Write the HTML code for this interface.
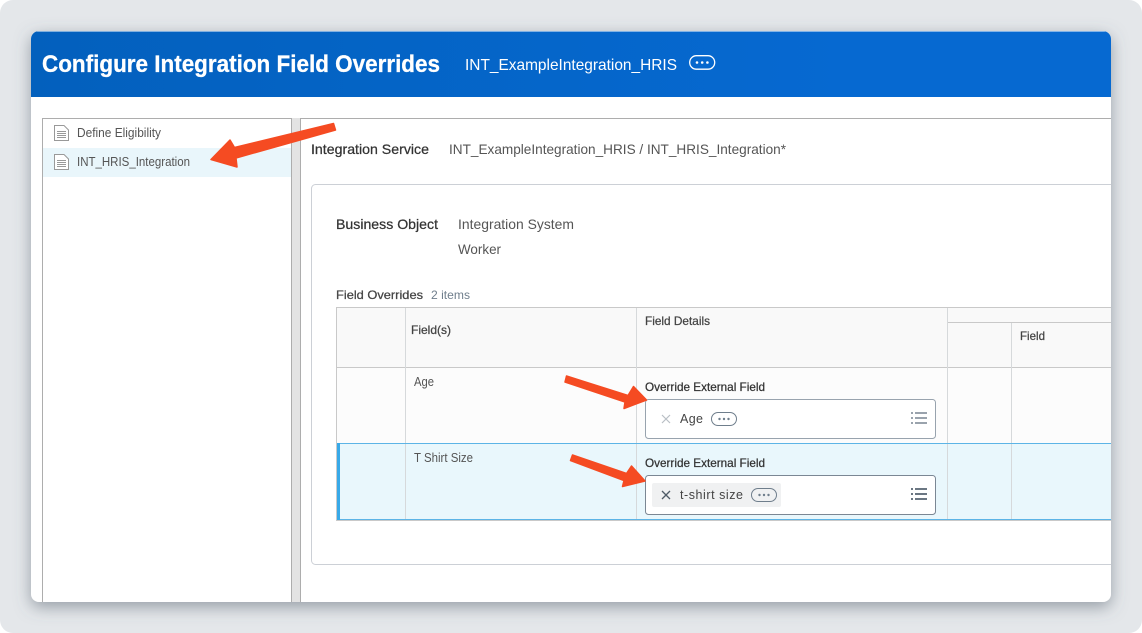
<!DOCTYPE html>
<html><head><meta charset="utf-8"><style>
html,body{margin:0;padding:0;background:#fff;width:1142px;height:633px;overflow:hidden}
svg{display:block}
text{font-family:"Liberation Sans",sans-serif}
.m{stroke:currentColor;stroke-width:.25}
</style></head><body>
<svg width="1142" height="633" viewBox="0 0 1142 633" xmlns="http://www.w3.org/2000/svg">
<defs>
<linearGradient id="h" x1="0" x2="1" y1="0" y2="0"><stop offset="0" stop-color="#0360bd"/><stop offset=".75" stop-color="#0669d1"/><stop offset="1" stop-color="#0669d1"/></linearGradient>
<filter id="s" x="-5%" y="-5%" width="110%" height="115%"><feDropShadow dx="0" dy="5" stdDeviation="8" flood-color="#56626e" flood-opacity=".55"/></filter>
<clipPath id="c"><rect x="31" y="31" width="1080" height="571" rx="8"/></clipPath>
<g id="doc" fill="none" stroke="#999"><path d="M.5.5H10L14.500 5V15.500H.5Z" stroke-width="1" fill="#fff"/><path d="M3 6.500H12M3 8.500H12M3 10.500H12M3 12.500H12" stroke-width=".9"/></g>
<g id="pill"><rect x=".5" y=".5" width="25" height="13" rx="6.500" fill="none" stroke="#6f7e8c"/><circle cx="8.500" cy="7" r="1.200" fill="#6f7e8c"/><circle cx="13" cy="7" r="1.200" fill="#6f7e8c"/><circle cx="17.500" cy="7" r="1.200" fill="#6f7e8c"/></g>
</defs>
<rect width="1142" height="633" rx="13" fill="#e4e7ea"/>
<rect x="31" y="31" width="1080" height="571" rx="8" fill="#fff" filter="url(#s)"/>
<g clip-path="url(#c)">
<rect x="31" y="31.500" width="1080" height="65.500" fill="url(#h)"/>
<rect x="42" y="148" width="250" height="29" fill="#e9f6fb"/>
<rect x="292" y="118" width="8" height="484" fill="#e3e3e3"/>
<path d="M42.500 602V118.500H291.500V602M300.500 602V118.500H1111" fill="none" stroke="#adadad"/>
<rect x="311.500" y="184.500" width="820" height="380" rx="4" fill="#fff" stroke="#ccd0d6"/>
<rect x="337" y="308" width="774" height="60" fill="#f9f9f9"/>
<rect x="337" y="368" width="774" height="76" fill="#fcfcfc"/>
<rect x="337" y="444" width="774" height="76" fill="#e9f7fc"/>
<path d="M1111 307.500H336.500V520.500H1111M948 322.500H1111M337 367.500H1111" fill="none" stroke="#c9c9c9"/>
<path d="M405.500 308V520M636.500 308V520M947.500 308V520M1011.500 323V520" fill="none" stroke="#d6d9db"/>
<path d="M337 443.500H1111M337 519.500H1111" fill="none" stroke="#5cb4e6"/>
<rect x="337" y="443" width="3" height="77" fill="#38a9e8"/>
<rect x="645.500" y="399.500" width="290" height="39" rx="3" fill="#fff" stroke="#98a3ae"/>
<rect x="645.500" y="475.500" width="290" height="39" rx="3" fill="#fff" stroke="#7b8794"/>
<rect x="652" y="483" width="129" height="24" rx="2" fill="#f0f1f2"/>
</g>
<use href="#doc" x="54" y="125"/>
<use href="#doc" x="54" y="154"/>
<path d="M662 415L670 423M670 415L662 423" stroke="#b9bfc5" stroke-width="1.200" fill="none"/>
<path d="M662 491L670 499M670 491L662 499" stroke="#4f5b67" stroke-width="1.300" fill="none"/>
<use href="#pill" x="711" y="412"/>
<use href="#pill" x="751" y="488"/>
<g fill="#9aa3ad"><rect x="911" y="412" width="2" height="2"/><rect x="915" y="412" width="12" height="2"/><rect x="911" y="417" width="2" height="2"/><rect x="915" y="417" width="12" height="2"/><rect x="911" y="422" width="2" height="2"/><rect x="915" y="422" width="12" height="2"/></g>
<g fill="#6b7783"><rect x="911" y="488" width="2" height="2"/><rect x="915" y="488" width="12" height="2"/><rect x="911" y="493" width="2" height="2"/><rect x="915" y="493" width="12" height="2"/><rect x="911" y="498" width="2" height="2"/><rect x="915" y="498" width="12" height="2"/></g>
<rect x="689.700" y="55.700" width="25" height="13.500" rx="6.700" fill="none" stroke="#fff" stroke-width="1.300"/>
<circle cx="697" cy="62.500" r="1.300" fill="#fff"/><circle cx="702.200" cy="62.500" r="1.300" fill="#fff"/><circle cx="707.400" cy="62.500" r="1.300" fill="#fff"/>
<text x="42" y="72" font-size="24" font-weight="700" fill="#fff" stroke="#fff" stroke-width=".3" textLength="398" lengthAdjust="spacingAndGlyphs">Configure Integration Field Overrides</text>
<text x="465" y="70" font-size="16" fill="#fff" textLength="212" lengthAdjust="spacingAndGlyphs">INT_ExampleIntegration_HRIS</text>
<text x="77" y="137" font-size="12.500" fill="#555" textLength="84" lengthAdjust="spacingAndGlyphs">Define Eligibility</text>
<text x="77" y="166" font-size="12.500" fill="#555" textLength="113" lengthAdjust="spacingAndGlyphs">INT_HRIS_Integration</text>
<text x="311" y="154" font-size="14" class="m" fill="#333" color="#333" textLength="118" lengthAdjust="spacingAndGlyphs">Integration Service</text>
<text x="449" y="154" font-size="14" fill="#555" textLength="337" lengthAdjust="spacingAndGlyphs">INT_ExampleIntegration_HRIS / INT_HRIS_Integration*</text>
<text x="336" y="229" font-size="14" class="m" fill="#333" color="#333" textLength="102" lengthAdjust="spacingAndGlyphs">Business Object</text>
<text x="458" y="229" font-size="14" fill="#555" textLength="116" lengthAdjust="spacingAndGlyphs">Integration System</text>
<text x="458" y="254" font-size="14" fill="#555" textLength="43" lengthAdjust="spacingAndGlyphs">Worker</text>
<text x="336" y="299" font-size="12" class="m" fill="#444" color="#444" textLength="87" lengthAdjust="spacingAndGlyphs">Field Overrides</text>
<text x="431" y="299" font-size="12" fill="#6f7e8c" textLength="39" lengthAdjust="spacingAndGlyphs">2 items</text>
<text x="411" y="334" font-size="12" class="m" fill="#444" color="#444" textLength="40" lengthAdjust="spacingAndGlyphs">Field(s)</text>
<text x="645" y="325" font-size="12" class="m" fill="#444" color="#444" textLength="65" lengthAdjust="spacingAndGlyphs">Field Details</text>
<text x="1020" y="340" font-size="12" class="m" fill="#444" color="#444" textLength="25" lengthAdjust="spacingAndGlyphs">Field</text>
<text x="414" y="386" font-size="12.500" fill="#555" textLength="20" lengthAdjust="spacingAndGlyphs">Age</text>
<text x="414" y="462" font-size="12.500" fill="#555" textLength="59" lengthAdjust="spacingAndGlyphs">T Shirt Size</text>
<text x="645" y="391" font-size="12" class="m" fill="#333" color="#333" textLength="120" lengthAdjust="spacingAndGlyphs">Override External Field</text>
<text x="645" y="467" font-size="12" class="m" fill="#333" color="#333" textLength="120" lengthAdjust="spacingAndGlyphs">Override External Field</text>
<text x="680" y="423" font-size="12.500" fill="#444" textLength="23" lengthAdjust="spacing">Age</text>
<text x="680" y="499" font-size="12.500" fill="#444" textLength="63" lengthAdjust="spacing">t-shirt size</text>
<g fill="#f54b22" stroke="#f54b22" stroke-width="1.500" stroke-linejoin="round">
<path d="M333.500 123.500L335.500 130L236 158L237 167L211 159.500L230 140L234.500 147.500Z"/>
<path d="M566.500 376L628 395.500L633.500 386.500L646.500 400L624 408.500L625 402L565 382Z"/>
<path d="M572.500 455L626.500 473.500L631.500 466L645 481L622.500 486.500L624 480.500L570.500 460.500Z"/>
</g>
</svg>
</body></html>
